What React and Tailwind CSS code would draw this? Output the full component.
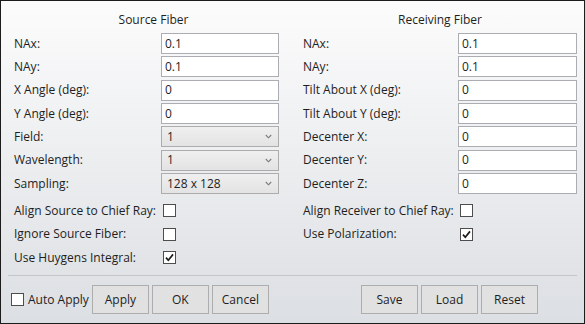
const font = { fontFamily: '"Open Sans", "Noto Sans", sans-serif' };

function Check({ checked, className = '' }) {
  return (
    <span className={`flex h-[13px] w-[13px] items-center justify-center border border-[#4d4d4d] bg-white ${className}`}>
      {checked && (
        <svg width="11" height="11" viewBox="0 0 11 11">
          <path d="M2 5.6 L4.3 8.2 L9 2.4" fill="none" stroke="#1a1a1a" strokeWidth="1.7" />
        </svg>
      )}
    </span>
  );
}

function Row({ label, children }) {
  return (
    <div className="flex h-[23.33px] items-center">
      <span className="w-[var(--lw)] shrink-0 text-[12px] text-[#1e1e1e]">{label}</span>
      {children}
    </div>
  );
}

function Input({ value }) {
  return (
    <div className="flex h-[21px] flex-1 items-center border border-[#abadb3] bg-white pl-[3px] text-[12px] text-[#1e1e1e]">
      {value}
    </div>
  );
}

function Select({ value }) {
  return (
    <div className="flex h-[21px] flex-1 items-center justify-between border border-[#acacac] bg-gradient-to-b from-[#efefef] to-[#e3e3e3] pl-[5px] pr-[6px] text-[12px] text-[#1e1e1e]">
      <span>{value}</span>
      <svg width="7" height="5" viewBox="0 0 7 5">
        <path d="M0.8 1 L3.5 3.8 L6.2 1" fill="none" stroke="#7a7a7a" strokeWidth="1.1" />
      </svg>
    </div>
  );
}

function Button({ children, w = 'w-[57px]' }) {
  return (
    <button className={`${w} h-[29px] border border-[#adadad] bg-[#e1e1e1] text-[12px] text-[#1e1e1e]`}>{children}</button>
  );
}

export default function App() {
  return (
    <div style={font} className="flex h-[324px] w-[585px] flex-col border border-[#1c1c1c] bg-gradient-to-b from-[#fcfcfc] to-[#dcdfe3]">
      <div className="flex gap-6 pl-[13px] pt-[10px]">
        <div className="w-[265px] [--lw:147px]">
          <div className="h-[21px] pl-[14px] text-center text-[12px] text-[#1e1e1e]">Source Fiber</div>
          <Row label="NAx:"><Input value="0.1" /></Row>
          <Row label="NAy:"><Input value="0.1" /></Row>
          <Row label="X Angle (deg):"><Input value="0" /></Row>
          <Row label="Y Angle (deg):"><Input value="0" /></Row>
          <Row label="Field:"><Select value="1" /></Row>
          <Row label="Wavelength:"><Select value="1" /></Row>
          <Row label="Sampling:"><Select value="128 x 128" /></Row>
          <div className="mt-[4px]">
            <Row label="Align Source to Chief Ray:"><Check className="ml-[2px]" /></Row>
            <Row label="Ignore Source Fiber:"><Check className="ml-[2px]" /></Row>
            <Row label="Use Huygens Integral:"><Check checked className="ml-[2px]" /></Row>
          </div>
        </div>
        <div className="w-[274px] [--lw:155px]">
          <div className="h-[21px] text-center text-[12px] text-[#1e1e1e]">Receiving Fiber</div>
          <Row label="NAx:"><Input value="0.1" /></Row>
          <Row label="NAy:"><Input value="0.1" /></Row>
          <Row label="Tilt About X (deg):"><Input value="0" /></Row>
          <Row label="Tilt About Y (deg):"><Input value="0" /></Row>
          <Row label="Decenter X:"><Input value="0" /></Row>
          <Row label="Decenter Y:"><Input value="0" /></Row>
          <Row label="Decenter Z:"><Input value="0" /></Row>
          <div className="mt-[4px]">
            <Row label="Align Receiver to Chief Ray:"><Check className="ml-[2px]" /></Row>
            <Row label="Use Polarization:"><Check checked className="ml-[2px]" /></Row>
          </div>
        </div>
      </div>
      <div className="mx-[7px] mt-[6px] h-px bg-[#c3c7cb]" />
      <div className="flex items-center pl-[10px] pt-[9px]">
        <Check />
        <span className="ml-[4px] text-[12px] text-[#1e1e1e]">Auto Apply</span>
        <div className="ml-[3px] flex gap-[3px]">
          <Button>Apply</Button>
          <Button>OK</Button>
          <Button>Cancel</Button>
        </div>
        <div className="ml-auto mr-[46px] flex gap-[3px]">
          <Button>Save</Button>
          <Button>Load</Button>
          <Button>Reset</Button>
        </div>
      </div>
    </div>
  );
}
